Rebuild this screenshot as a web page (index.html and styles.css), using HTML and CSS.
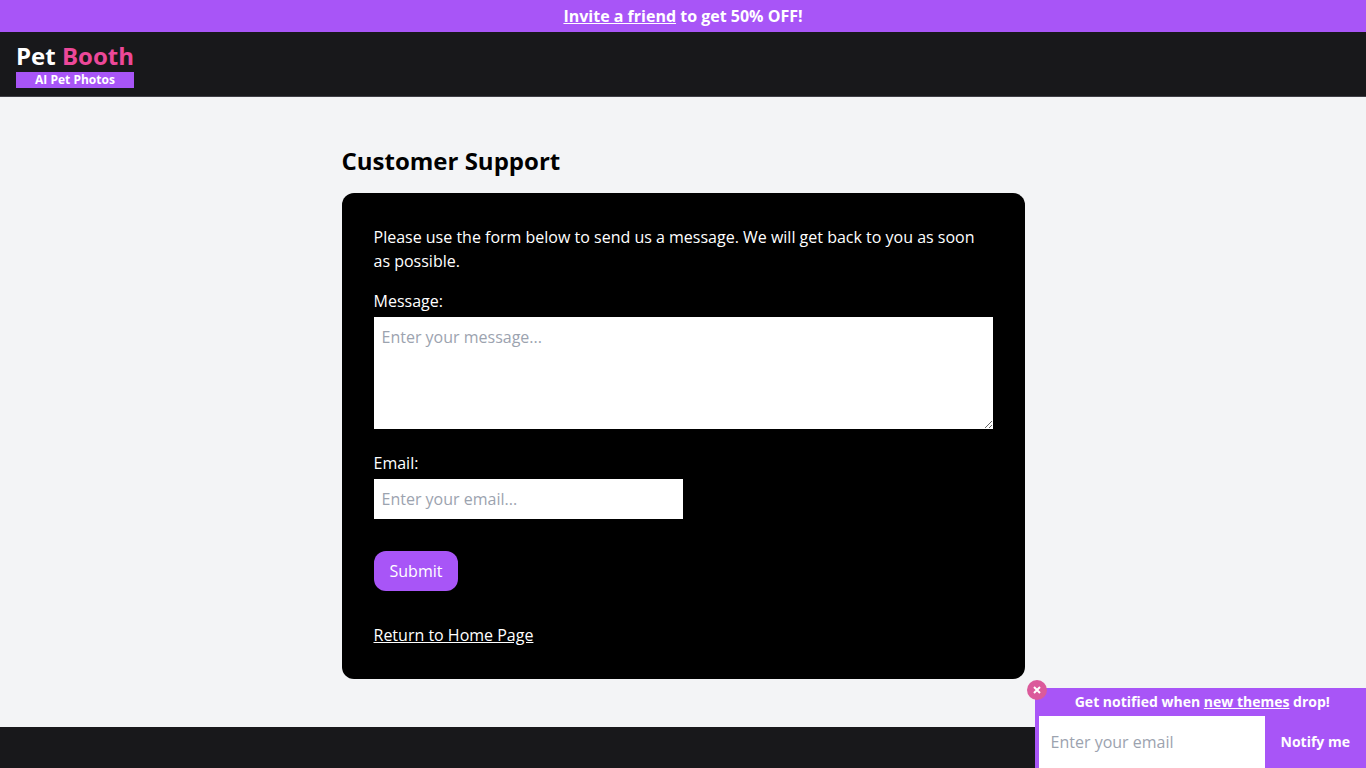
FILE: index.html
```html
<!DOCTYPE html>
<html lang="en">
<head>
    <meta charset="UTF-8">
    <meta name="viewport" content="width=device-width, initial-scale=1.0">
    <title>Customer Support - Pet Booth</title>
    <link rel="stylesheet" href="styles.css">
</head>
<body>
    <div class="promo"><a href="#invite">Invite a friend</a> to get 50% OFF!</div>

    <header class="header">
        <a class="logo" href="/">
            <span class="logo-name">Pet <span class="logo-accent">Booth</span></span>
            <span class="logo-tag">AI Pet Photos</span>
        </a>
    </header>

    <main class="content">
        <h1>Customer Support</h1>
        <div class="card">
            <p>Please use the form below to send us a message. We will get back to you as soon as possible.</p>
            <form>
                <div class="field">
                    <label for="message">Message:</label>
                    <textarea id="message" rows="4" placeholder="Enter your message..."></textarea>
                </div>
                <div class="field">
                    <label for="email">Email:</label>
                    <input class="email" type="email" id="email" placeholder="Enter your email...">
                </div>
                <button class="submit" type="submit">Submit</button>
            </form>
            <a class="home-link" href="/">Return to Home Page</a>
        </div>
    </main>

    <footer class="footer"></footer>

    <aside class="notify">
        <button class="notify-close" type="button" aria-label="Close">
            <svg width="8" height="8" viewBox="0 0 8 8">
                <path d="M1 1L7 7M7 1L1 7" stroke="#fff" stroke-width="2" fill="none"/>
            </svg>
        </button>
        <div class="notify-title">Get notified when <a href="#themes">new themes</a> drop!</div>
        <form class="notify-form">
            <input type="email" placeholder="Enter your email" aria-label="Enter your email">
            <button type="submit">Notify me</button>
        </form>
    </aside>
</body>
</html>
```
FILE: styles.css
```css
* {
    box-sizing: border-box;
    margin: 0;
    padding: 0;
}

body {
    font-family: "Open Sans", sans-serif;
    font-size: 16px;
    line-height: 24px;
    background-color: #f3f4f6;
    color: #000;
    min-height: 100vh;
    display: flex;
    flex-direction: column;
}

a {
    color: inherit;
}

input,
textarea,
button {
    font: inherit;
    border: none;
    border-radius: 0;
}

input::placeholder,
textarea::placeholder {
    color: #9ca3af;
}

button {
    background-color: #a855f7;
    color: #fff;
    cursor: pointer;
}

.promo {
    background-color: #a855f7;
    color: #fff;
    font-weight: 700;
    text-align: center;
    padding: 4px;
}

/* Header */
.header {
    display: flex;
    background-color: #18181b;
    border-bottom: 1px solid #3f3f46;
    padding: 8px 16px;
}

.logo {
    display: flex;
    flex-direction: column;
    color: #fff;
    font-weight: 700;
    text-decoration: none;
}

.logo-name {
    font-size: 24px;
    line-height: 32px;
}

.logo-accent {
    color: #ec4899;
}

.logo-tag {
    background-color: #a855f7;
    font-size: 12px;
    line-height: 16px;
    text-align: center;
}

/* Support form */
.content {
    width: 50%;
    margin: 0 auto;
    padding: 48px 0;
}

h1 {
    font-size: 24px;
    line-height: 32px;
    margin-bottom: 16px;
}

.card {
    background-color: #000;
    color: #fff;
    border-radius: 12px;
    padding: 32px;
}

.card p {
    margin-bottom: 16px;
}

.field {
    margin-bottom: 22px;
}

.field label {
    display: block;
    margin-bottom: 4px;
}

.field textarea,
.field input {
    display: block;
    width: 100%;
    padding: 8px;
    background-color: #fff;
    color: #000;
}

.field .email {
    width: 50%;
}

.submit {
    display: block;
    margin: 32px 0;
    padding: 8px 16px;
    border-radius: 12px;
}

.home-link {
    display: block;
    width: fit-content;
}

.footer {
    flex: 1;
    background-color: #18181b;
}

/* Newsletter popup */
.notify {
    position: fixed;
    right: 0;
    bottom: 0;
    background-color: #a855f7;
    color: #fff;
    font-size: 14px;
    font-weight: 700;
    padding-left: 4px;
}

.notify-title {
    text-align: center;
    line-height: 20px;
    padding: 4px;
}

.notify-form {
    display: flex;
}

.notify-form input {
    width: 226px;
    height: 52px;
    padding: 0 12px;
    background-color: #fff;
    color: #000;
    font-size: 16px;
    font-weight: 400;
}

.notify-form button {
    padding: 0 16px;
}

.notify-close {
    position: absolute;
    top: -8px;
    left: -8px;
    display: flex;
    align-items: center;
    justify-content: center;
    width: 20px;
    height: 20px;
    border-radius: 50%;
    background-color: #db5a9b;
}
```
